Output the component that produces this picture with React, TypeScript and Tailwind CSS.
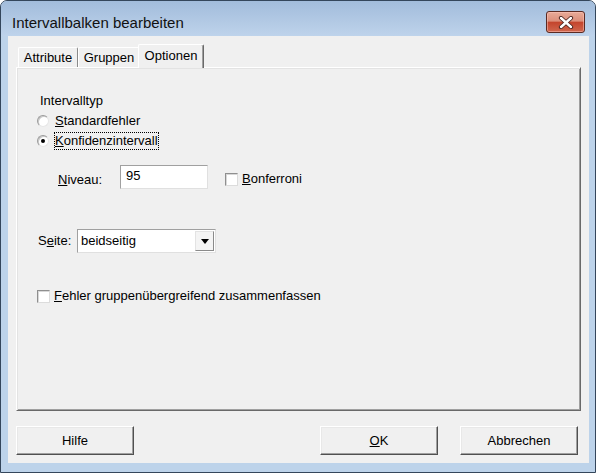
import React from "react";

function Radio({ checked }: { checked?: boolean }) {
  return (
    <div className="w-[12px] h-[12px] rounded-full border border-t-[#9a9a9a] border-l-[#9a9a9a] border-r-[#e6e6e6] border-b-[#e6e6e6] bg-white flex items-center justify-center shrink-0 shadow-[inset_1px_1px_0_#c8c8c8]">
      {checked && <div className="w-[4px] h-[4px] rounded-full bg-black" />}
    </div>
  );
}

function Check() {
  return (
    <div className="w-[13px] h-[13px] border border-t-[#8f8f8f] border-l-[#8f8f8f] border-r-[#dcdcdc] border-b-[#dcdcdc] bg-white shrink-0 shadow-[inset_1px_1px_0_#d8d8d8]" />
  );
}

function Btn({ children, className = "" }: { children: React.ReactNode; className?: string }) {
  return (
    <div
      className={
        "w-[118px] h-[29px] border border-t-white border-l-white border-r-[#505050] border-b-[#505050] shadow-[inset_-1px_-1px_0_#a0a0a0,inset_1px_1px_0_#e8e8e8] flex items-center justify-center bg-[#f0f0f0] " +
        className
      }
    >
      {children}
    </div>
  );
}

function Tab({ children, w }: { children: React.ReactNode; w: string }) {
  return (
    <div
      className={
        w +
        " h-[20px] border-t border-l border-white border-r border-r-[#8a8a8a] rounded-t-[2px] bg-[#f0f0f0] flex items-center justify-center"
      }
    >
      {children}
    </div>
  );
}

export default function App() {
  return (
    <div className="w-[596px] h-[473px] bg-white font-['Liberation_Sans',Arial,sans-serif] text-[13px] text-black leading-[16px]">
      <div className="w-full h-full flex flex-col rounded-t-[7px] border border-[#34465b] bg-[#bdd3ea] overflow-hidden">
        {/* title bar */}
        <div className="h-[35px] flex items-start shrink-0 bg-gradient-to-b from-[#a2bcdb] to-[#bed3eb] pl-[11px] pr-[10px]">
          <span className="flex-1 text-[15px] leading-[18px] mt-[13px] text-[#111]">Intervallbalken bearbeiten</span>
          <div className="mt-[10px] w-[39px] h-[22px] rounded-[3px] border border-[#5a2a22] bg-[linear-gradient(#e8ab99,#dc8f7b_45%,#c4452d_52%,#d0674e)] flex items-center justify-center shadow-[inset_0_0_0_1px_rgba(255,200,190,0.5)]">
            <svg width="16" height="13" viewBox="0 0 16 13">
              <path d="M3 2 L13 11 M13 2 L3 11" stroke="#4a2520" strokeWidth="4.2" strokeLinecap="round" />
              <path d="M3 2 L13 11 M13 2 L3 11" stroke="#ffffff" strokeWidth="2.4" strokeLinecap="round" />
            </svg>
          </div>
        </div>
        {/* client */}
        <div className="flex-1 ml-[7px] mr-[6px] mb-[9px] bg-[#f0f0f0] flex flex-col px-[8px] pt-[8px]">
          {/* tabs */}
          <div className="flex items-end h-[23px] pl-[2px] relative z-10">
            <Tab w="w-[60px]">Attribute</Tab>
            <Tab w="w-[62px]">Gruppen</Tab>
            <div className="-ml-[2px] w-[66px] h-[24px] -mb-px bg-[#f0f0f0] border-t border-l border-white border-r border-r-[#696969] rounded-t-[2px] shadow-[inset_-1px_0_0_#a0a0a0] flex justify-center pt-[3px]">
              Optionen
            </div>
          </div>
          {/* panel */}
          <div className="h-[344px] border border-t-white border-l-white border-r-[#696969] border-b-[#696969] shadow-[inset_1px_1px_0_#e3e3e3,inset_-1px_-1px_0_#a0a0a0] flex flex-col pl-[20px] pt-[23px]">
            <div className="h-[20px] flex items-center ml-[3px]">Intervalltyp</div>
            <div className="h-[20px] flex items-center gap-[6px]">
              <Radio />
              <span>
                <span className="underline">S</span>tandardfehler
              </span>
            </div>
            <div className="h-[20px] flex items-center gap-[5px]">
              <Radio checked />
              <span className="border border-dotted border-black leading-[16px]">
                <span className="underline">K</span>onfidenzintervall
              </span>
            </div>
            <div className="h-[24px] mt-[14px] flex items-center">
              <span className="ml-[21px] w-[62px] pt-[5px]">
                <span className="underline">N</span>iveau:
              </span>
              <div className="w-[88px] h-[24px] bg-white border border-t-[#a0a0a0] border-l-[#a0a0a0] border-r-[#e0e0e0] border-b-[#e0e0e0] pl-[5px] flex items-center pb-[2px]">
                95
              </div>
              <div className="ml-[17px] mt-[4px] flex items-center gap-[4px]">
                <Check />
                <span>
                  <span className="underline">B</span>onferroni
                </span>
              </div>
            </div>
            <div className="h-[24px] mt-[40px] flex items-center">
              <span className="ml-[1px] w-[39px]">
                S<span className="underline">e</span>ite:
              </span>
              <div className="w-[139px] h-[24px] bg-white border border-t-[#a0a0a0] border-l-[#a0a0a0] border-r-[#e0e0e0] border-b-[#e0e0e0] flex items-center pl-[3px] pr-[1px]">
                <span className="flex-1">beidseitig</span>
                <div className="w-[19px] h-[20px] bg-[#f4f4f4] border border-t-[#e3e3e3] border-l-[#e3e3e3] border-r-[#8a8a8a] border-b-[#8a8a8a] flex items-center justify-center">
                  <svg width="8" height="5" viewBox="0 0 8 5">
                    <path d="M0 0 H8 L4 5 Z" fill="#000" />
                  </svg>
                </div>
              </div>
            </div>
            <div className="h-[20px] mt-[33px] flex items-center gap-[4px]">
              <Check />
              <span>
                <span className="underline">F</span>ehler gruppenübergreifend zusammenfassen
              </span>
            </div>
          </div>
          {/* buttons */}
          <div className="flex mt-[15px] h-[29px] pr-[3px]">
            <Btn>Hilfe</Btn>
            <div className="flex-1" />
            <Btn>
              <span>
                <span className="underline">O</span>K
              </span>
            </Btn>
            <Btn className="ml-[22px]">Abbrechen</Btn>
          </div>
        </div>
      </div>
    </div>
  );
}
